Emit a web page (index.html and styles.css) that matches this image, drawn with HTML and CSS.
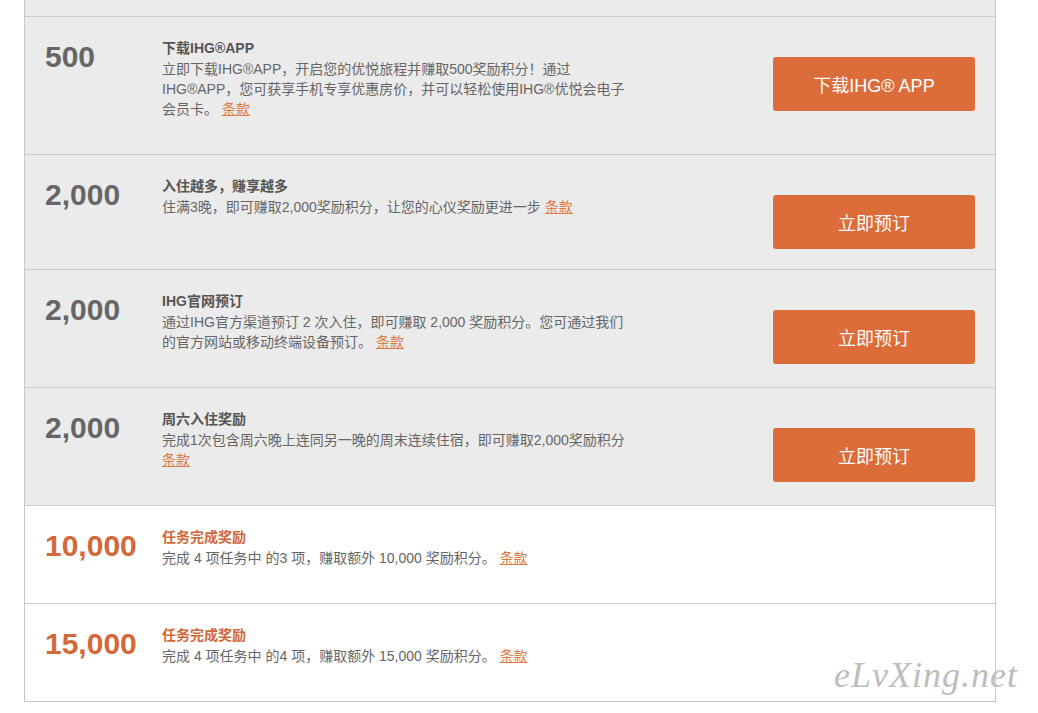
FILE: index.html
```html
<!DOCTYPE html>
<html lang="zh-CN">
<head>
<meta charset="utf-8">
<title>IHG 奖励积分</title>
<link rel="stylesheet" href="styles.css">
</head>
<body>
<div class="list">
  <div class="row row-gray row-partial"></div>

  <div class="row row-gray">
    <div class="num">500</div>
    <div class="text">
      <div class="title">下载IHG®APP</div>
      <div class="desc">立即下载IHG®APP，开启您的优悦旅程并赚取500奖励积分！通过<br>IHG®APP，您可获享手机专享优惠房价，并可以轻松使用IHG®优悦会电子<br>会员卡。 <a class="terms" href="#">条款</a></div>
    </div>
    <a class="btn" href="#">下载IHG® APP</a>
  </div>

  <div class="row row-gray">
    <div class="num">2,000</div>
    <div class="text">
      <div class="title">入住越多，赚享越多</div>
      <div class="desc">住满3晚，即可赚取2,000奖励积分，让您的心仪奖励更进一步 <a class="terms" href="#">条款</a></div>
    </div>
    <a class="btn" href="#">立即预订</a>
  </div>

  <div class="row row-gray">
    <div class="num">2,000</div>
    <div class="text">
      <div class="title">IHG官网预订</div>
      <div class="desc">通过IHG官方渠道预订 2 次入住，即可赚取 2,000 奖励积分。您可通过我们<br>的官方网站或移动终端设备预订。 <a class="terms" href="#">条款</a></div>
    </div>
    <a class="btn" href="#">立即预订</a>
  </div>

  <div class="row row-gray">
    <div class="num">2,000</div>
    <div class="text">
      <div class="title">周六入住奖励</div>
      <div class="desc">完成1次包含周六晚上连同另一晚的周末连续住宿，即可赚取2,000奖励积分<br><a class="terms" href="#">条款</a></div>
    </div>
    <a class="btn" href="#">立即预订</a>
  </div>

  <div class="row row-white">
    <div class="num num-orange">10,000</div>
    <div class="text">
      <div class="title title-orange">任务完成奖励</div>
      <div class="desc">完成 4 项任务中 的3 项，赚取额外 10,000 奖励积分。 <a class="terms" href="#">条款</a></div>
    </div>
  </div>

  <div class="row row-white">
    <div class="num num-orange">15,000</div>
    <div class="text">
      <div class="title title-orange">任务完成奖励</div>
      <div class="desc">完成 4 项任务中 的4 项，赚取额外 15,000 奖励积分。 <a class="terms" href="#">条款</a></div>
    </div>
  </div>
</div>
<div class="watermark">eLvXing.net</div>
</body>
</html>
```

FILE: styles.css
```css
html, body {
  margin: 0;
  padding: 0;
  background: #ffffff;
}

body {
  font-family: "Liberation Sans", "Noto Sans CJK SC", Arial, sans-serif;
  position: relative;
  height: 713px;
  overflow: hidden;
}

.list {
  margin-left: 24px;
  width: 970px;
  border-left: 1px solid #c8c8c8;
  border-right: 1px solid #c8c8c8;
  border-bottom: 1px solid #c8c8c8;
}

.row {
  display: flex;
  align-items: flex-start;
  padding: 20px 20px 20px 20px;
  border-bottom: 1px solid #cacaca;
}

.row:last-child {
  border-bottom: none;
}

.row-gray {
  background: #ebebeb;
}

.row-white {
  background: #ffffff;
}

.row-partial {
  padding: 0;
  height: 16px;
}

.num {
  width: 117px;
  flex: none;
  margin-top: 5px;
  font-size: 30px;
  line-height: 30px;
  font-weight: bold;
  color: #666666;
  font-family: "Liberation Sans", Arial, sans-serif;
}

.num-orange {
  color: #d2693a;
}

.text {
  flex: 1;
  padding-top: 1px;
  padding-bottom: 15px;
}

.title {
  font-size: 14px;
  line-height: 21px;
  font-weight: bold;
  color: #555555;
}

.title-orange {
  color: #d0683a;
}

.desc {
  font-size: 14px;
  line-height: 20px;
  color: #666666;
  white-space: nowrap;
}

.terms {
  color: #dc7a45;
  text-decoration: underline;
}

.btn {
  flex: none;
  margin-top: 20px;
  width: 202px;
  height: 54px;
  display: flex;
  align-items: center;
  justify-content: center;
  background: #dc6c39;
  border-radius: 3px;
  color: #ffffff;
  font-size: 18px;
  text-decoration: none;
}

.watermark {
  position: absolute;
  left: 834px;
  top: 654px;
  font-family: "Liberation Serif", serif;
  font-style: italic;
  font-size: 36px;
  letter-spacing: 1px;
  color: #bdbdbd;
}
```
